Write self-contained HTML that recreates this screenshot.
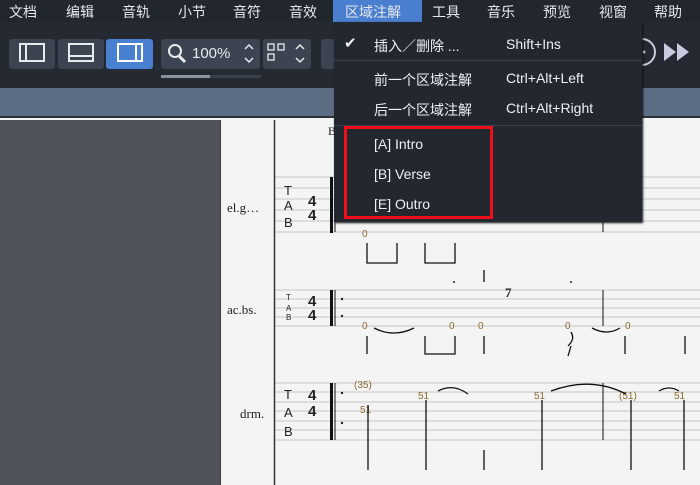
<!DOCTYPE html>
<html><head><meta charset="utf-8"><style>
*{margin:0;padding:0;box-sizing:border-box}
html,body{width:700px;height:485px;overflow:hidden}
body{background:#f4f4f4;font-family:"Liberation Sans","Noto Sans CJK SC",sans-serif;position:relative}
.a{position:absolute}
#menu{left:0;top:0;width:700px;height:22px;background:#22262d;color:#e6e8ec;font-size:14px}
#menu span{position:absolute;top:2px}
#tb{left:0;top:22px;width:700px;height:66px;background:#252932}
.btn{position:absolute;top:17px;height:30px;background:#3c4452;border-radius:3px}
#strip{left:0;top:88px;width:700px;height:30px;background:#5d6d84;border-bottom:2px solid #2c313a}
#left{left:0;top:120px;width:221px;height:365px;background:#50535a;border-right:1px solid #3a3d43}
#dd{left:334px;top:22px;width:308px;height:200px;background:#23272f;color:#eef0f3;font-size:14px;box-shadow:1px 1px 2px #111}
#dd span{position:absolute}
.sep{position:absolute;left:0;width:308px;height:1px;background:#3c424c}
</style></head><body>
<div class="a" id="menu">
<span style="left:9px">文档</span><span style="left:66px">编辑</span><span style="left:122px">音轨</span><span style="left:178px">小节</span><span style="left:233px">音符</span><span style="left:289px">音效</span>
<div class="a" style="left:333px;top:0;width:89px;height:22px;background:#4a7fd0"></div>
<span style="left:345px">区域注解</span><span style="left:432px">工具</span><span style="left:487px">音乐</span><span style="left:543px">预览</span><span style="left:599px">视窗</span><span style="left:654px">帮助</span>
</div>
<div class="a" id="tb">
<div class="btn" style="left:9px;width:46px"></div>
<div class="btn" style="left:58px;width:46px"></div>
<div class="btn" style="left:106px;width:47px;background:#4a80d2"></div>
<svg class="a" style="left:0;top:0" width="700" height="66">
<rect x="20" y="22" width="24" height="17" fill="none" stroke="#e8eaee" stroke-width="2"/><line x1="26" y1="22" x2="26" y2="39" stroke="#e8eaee" stroke-width="2"/>
<rect x="69" y="22" width="24" height="17" fill="none" stroke="#e8eaee" stroke-width="2"/><line x1="69" y1="34" x2="93" y2="34" stroke="#e8eaee" stroke-width="2"/>
<rect x="118" y="22" width="24" height="17" fill="none" stroke="#fff" stroke-width="2"/><line x1="136" y1="22" x2="136" y2="39" stroke="#fff" stroke-width="2"/>
</svg>
<div class="btn" style="left:161px;width:99px"></div>
<div class="btn" style="left:263px;width:48px"></div>
<div class="btn" style="left:321px;width:14px"></div>
<svg class="a" style="left:0;top:0" width="700" height="66">
<circle cx="175" cy="29" r="6" fill="none" stroke="#e8eaee" stroke-width="2"/><line x1="179" y1="34" x2="185" y2="40" stroke="#e8eaee" stroke-width="3"/>
<path d="M245 27l4-4 4 4M245 36l4 4 4-4" fill="none" stroke="#e8eaee" stroke-width="1.5"/>
<rect x="268" y="22" width="6" height="6" fill="none" stroke="#e8eaee" stroke-width="1.3"/><rect x="278" y="22" width="6" height="6" fill="none" stroke="#e8eaee" stroke-width="1.3"/><rect x="268" y="32" width="6" height="6" fill="none" stroke="#e8eaee" stroke-width="1.3"/>
<path d="M296 27l4-4 4 4M296 36l4 4 4-4" fill="none" stroke="#e8eaee" stroke-width="1.5"/>
<rect x="161" y="53" width="100" height="3" fill="#3a404b"/><rect x="161" y="53" width="49" height="3" fill="#8a929e"/>
<path d="M642 17a13 13 0 0 1 0 26" fill="none" stroke="#c8cbd6" stroke-width="2"/><circle cx="644" cy="30" r="1.5" fill="#c8cbd6"/>
<path d="M664 21l12 9-12 9zM677 21l12 9-12 9z" fill="#c8cbe0"/>
</svg>
<span class="a" style="left:192px;top:23px;color:#e8eaee;font-size:15px">100%</span>
</div>
<div class="a" id="strip"></div>
<div class="a" id="left"></div>
<svg class="a" style="left:222px;top:120px" width="478" height="365" font-family="Liberation Serif,serif">
<g stroke="#cfcfcf" stroke-width="1.2">
<line x1="52" y1="57" x2="478" y2="57"/><line x1="52" y1="68" x2="478" y2="68"/><line x1="52" y1="79" x2="478" y2="79"/><line x1="52" y1="90" x2="478" y2="90"/><line x1="52" y1="101" x2="478" y2="101"/><line x1="52" y1="112" x2="478" y2="112"/>
<line x1="52" y1="170" x2="478" y2="170"/><line x1="52" y1="179" x2="478" y2="179"/><line x1="52" y1="188" x2="478" y2="188"/><line x1="52" y1="197" x2="478" y2="197"/><line x1="52" y1="206" x2="478" y2="206"/>
<line x1="52" y1="263" x2="478" y2="263"/><line x1="52" y1="272" x2="478" y2="272"/><line x1="52" y1="282" x2="478" y2="282"/><line x1="52" y1="291" x2="478" y2="291"/><line x1="52" y1="301" x2="478" y2="301"/><line x1="52" y1="310" x2="478" y2="310"/><line x1="52" y1="320" x2="478" y2="320"/>
</g>
<line x1="52.5" y1="0" x2="52.5" y2="365" stroke="#333" stroke-width="1.5"/>
<g stroke="#111">
<rect x="108" y="57" width="3" height="56" fill="#111" stroke="none"/>
<rect x="108" y="170" width="3" height="36" fill="#111" stroke="none"/>
<rect x="108" y="263" width="3" height="57" fill="#111" stroke="none"/>
<line x1="113" y1="57" x2="113" y2="112"/><line x1="113" y1="170" x2="113" y2="206"/><line x1="113" y1="263" x2="113" y2="320"/>
<line x1="381" y1="57" x2="381" y2="112"/><line x1="381" y1="170" x2="381" y2="206"/><line x1="381" y1="263" x2="381" y2="320"/>
</g>
<g font-size="13" fill="#222">
<text x="5" y="92">el.g…</text><text x="5" y="194">ac.bs.</text><text x="18" y="298">drm.</text>
</g>
<g font-family="Liberation Sans,sans-serif" fill="#222">
<text x="62" y="75" font-size="13">T</text><text x="62" y="90" font-size="13">A</text><text x="62" y="107" font-size="13">B</text>
<text x="64" y="180" font-size="8">T</text><text x="64" y="191" font-size="8">A</text><text x="64" y="200" font-size="8">B</text>
<text x="62" y="279" font-size="13">T</text><text x="62" y="297" font-size="13">A</text><text x="62" y="316" font-size="13">B</text>
<text x="86" y="86" font-size="15" font-weight="bold">4</text><text x="86" y="100" font-size="15" font-weight="bold">4</text>
<text x="86" y="186" font-size="15" font-weight="bold">4</text><text x="86" y="200" font-size="15" font-weight="bold">4</text>
<text x="86" y="280" font-size="15" font-weight="bold">4</text><text x="86" y="296" font-size="15" font-weight="bold">4</text>
</g>
<g fill="#222"><circle cx="120" cy="179" r="1.2"/><circle cx="120" cy="196" r="1.2"/><circle cx="120" cy="273" r="1.2"/><circle cx="120" cy="303" r="1.2"/><circle cx="232" cy="162" r="1"/><circle cx="349" cy="162" r="1"/></g>
<g font-family="Liberation Sans,sans-serif" font-size="10" fill="#8a6a30">
<text x="140" y="117">0</text>
<text x="140" y="209">0</text><text x="227" y="209">0</text><text x="256" y="209">0</text><text x="343" y="209">0</text><text x="403" y="209">0</text>
<text x="132" y="268">(35)</text><text x="138" y="293">51</text><text x="196" y="279">51</text><text x="312" y="279">51</text><text x="397" y="279">(51)</text><text x="452" y="279">51</text>
</g>
<g stroke="#111" stroke-width="1.3" fill="none">
<path d="M145 123v20h30v-20M203 123v20h30v-20M262 150v12"/>
<path d="M145 216v18M203 216v18h30v-18M262 216v18M403 216v18M463 216v18M349 226l-3 10M349 212c3 5 2 9-3 14"/>
<path d="M146 285v65M204 280v70M262 330v20M320 280v70M409 280v70M462 280v70"/>
<path d="M152 208q20 10 40 0M370 208q15 8 28 0M216 271q15-8 30 3M329 271q40-15 75 3M437 271q10-6 20 0"/>
</g>
<text x="283" y="177" font-size="13" fill="#222" font-weight="bold">7</text>
</svg>
<div class="a" id="dd">
<span style="left:10px;top:12px;font-size:15px">✔</span>
<span style="left:40px;top:14px">插入／删除 ...</span><span style="left:172px;top:14px">Shift+Ins</span>
<div class="sep" style="top:38px"></div>
<span style="left:40px;top:48px">前一个区域注解</span><span style="left:172px;top:48px">Ctrl+Alt+Left</span>
<span style="left:40px;top:78px">后一个区域注解</span><span style="left:172px;top:78px">Ctrl+Alt+Right</span>
<div class="sep" style="top:103px"></div>
<span style="left:40px;top:114px">[A] Intro</span>
<span style="left:40px;top:144px">[B] Verse</span>
<span style="left:40px;top:174px">[E] Outro</span>
</div>
<div class="a" style="left:344px;top:126px;width:149px;height:93px;border:3px solid #ee0f1a"></div>
<span class="a" style="left:328px;top:124px;font-size:12px;color:#222;font-family:'Liberation Serif',serif">B</span>
</body></html>
